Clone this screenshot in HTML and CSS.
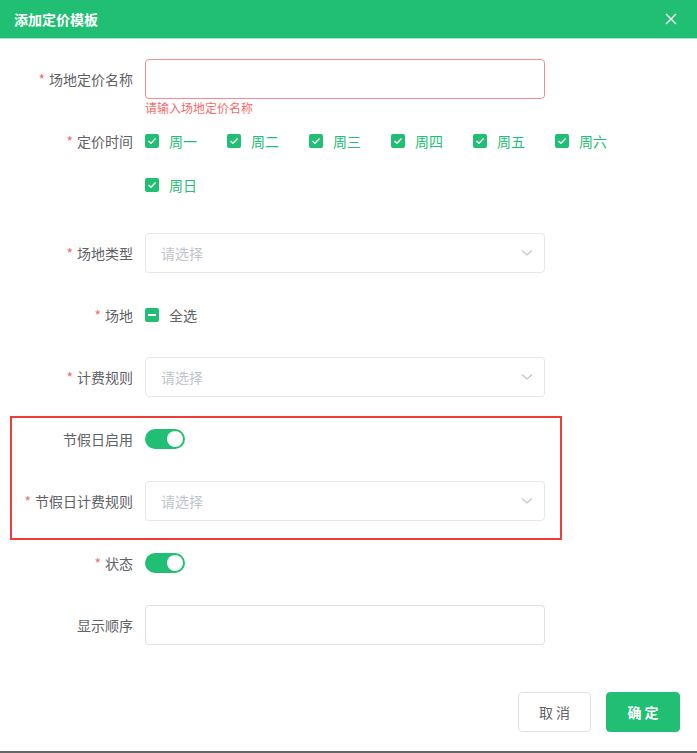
FILE: index.html
```html
<!DOCTYPE html>
<html lang="zh">
<head>
<meta charset="utf-8">
<title>添加定价模板</title>
<link rel="stylesheet" href="styles.css">
</head>
<body>
<div class="dialog">
  <div class="header">
    <span class="title">添加定价模板</span>
    <svg class="close" width="12" height="12" viewBox="0 0 12 12"><path d="M1 1L11 11M11 1L1 11" stroke="#fff" stroke-width="1.4" fill="none"/></svg>
  </div>
  <div class="body">
    <div class="item item-err">
      <label class="label"><span class="req">*</span>场地定价名称</label>
      <div class="content">
        <div class="input error"></div>
        <div class="err-msg">请输入场地定价名称</div>
      </div>
    </div>
    <div class="item">
      <label class="label"><span class="req">*</span>定价时间</label>
      <div class="content wide">
        <div class="checks">
          <span class="check on"><span class="box"><svg width="10" height="8" viewBox="0 0 10 8"><path d="M1.5 4L4 6.3L8.5 1.5" stroke="#fff" stroke-width="1.3" fill="none"/></svg></span><span class="ctext">周一</span></span>
          <span class="check on"><span class="box"><svg width="10" height="8" viewBox="0 0 10 8"><path d="M1.5 4L4 6.3L8.5 1.5" stroke="#fff" stroke-width="1.3" fill="none"/></svg></span><span class="ctext">周二</span></span>
          <span class="check on"><span class="box"><svg width="10" height="8" viewBox="0 0 10 8"><path d="M1.5 4L4 6.3L8.5 1.5" stroke="#fff" stroke-width="1.3" fill="none"/></svg></span><span class="ctext">周三</span></span>
          <span class="check on"><span class="box"><svg width="10" height="8" viewBox="0 0 10 8"><path d="M1.5 4L4 6.3L8.5 1.5" stroke="#fff" stroke-width="1.3" fill="none"/></svg></span><span class="ctext">周四</span></span>
          <span class="check on"><span class="box"><svg width="10" height="8" viewBox="0 0 10 8"><path d="M1.5 4L4 6.3L8.5 1.5" stroke="#fff" stroke-width="1.3" fill="none"/></svg></span><span class="ctext">周五</span></span>
          <span class="check on"><span class="box"><svg width="10" height="8" viewBox="0 0 10 8"><path d="M1.5 4L4 6.3L8.5 1.5" stroke="#fff" stroke-width="1.3" fill="none"/></svg></span><span class="ctext">周六</span></span>
          <span class="check on"><span class="box"><svg width="10" height="8" viewBox="0 0 10 8"><path d="M1.5 4L4 6.3L8.5 1.5" stroke="#fff" stroke-width="1.3" fill="none"/></svg></span><span class="ctext">周日</span></span>
        </div>
      </div>
    </div>
    <div class="item">
      <label class="label"><span class="req">*</span>场地类型</label>
      <div class="content">
        <div class="input select"><span class="ph">请选择</span><svg class="arrow" width="12" height="8" viewBox="0 0 12 8"><path d="M1 1.5L6 6L11 1.5" stroke="#c0c4cc" stroke-width="1.1" fill="none"/></svg></div>
      </div>
    </div>
    <div class="item">
      <label class="label"><span class="req">*</span>场地</label>
      <div class="content">
        <span class="check"><span class="box"><span class="dash"></span></span><span class="ctext plain">全选</span></span>
      </div>
    </div>
    <div class="item">
      <label class="label"><span class="req">*</span>计费规则</label>
      <div class="content">
        <div class="input select"><span class="ph">请选择</span><svg class="arrow" width="12" height="8" viewBox="0 0 12 8"><path d="M1 1.5L6 6L11 1.5" stroke="#c0c4cc" stroke-width="1.1" fill="none"/></svg></div>
      </div>
    </div>
    <div class="item">
      <label class="label">节假日启用</label>
      <div class="content">
        <span class="switch"><span class="knob"></span></span>
      </div>
    </div>
    <div class="item">
      <label class="label"><span class="req">*</span>节假日计费规则</label>
      <div class="content">
        <div class="input select"><span class="ph">请选择</span><svg class="arrow" width="12" height="8" viewBox="0 0 12 8"><path d="M1 1.5L6 6L11 1.5" stroke="#c0c4cc" stroke-width="1.1" fill="none"/></svg></div>
      </div>
    </div>
    <div class="item">
      <label class="label"><span class="req">*</span>状态</label>
      <div class="content">
        <span class="switch"><span class="knob"></span></span>
      </div>
    </div>
    <div class="item">
      <label class="label">显示顺序</label>
      <div class="content">
        <div class="input"></div>
      </div>
    </div>
  </div>
  <div class="footer">
    <button class="btn">取 消</button>
    <button class="btn primary">确 定</button>
  </div>
  <div class="highlight"></div>
</div>
</body>
</html>
```
FILE: styles.css
```css
html { background: #666; }
body {
  margin: 0;
  font-family: "Noto Sans CJK SC", "Noto Sans", sans-serif;
  font-size: 14px;
  color: #606266;
}
.dialog {
  position: relative;
  width: 697px;
  height: 751px;
  background: #fff;
}
.header {
  height: 38px;
  background: #21bf73;
  border-bottom: 1px solid #a6e6c6;
  display: flex;
  align-items: center;
  justify-content: space-between;
  padding: 0 20px 0 14px;
}
.title {
  color: #fff;
  font-size: 14px;
  font-weight: bold;
}
.close { display: block; }
.body { padding-top: 20px; }
.item {
  display: flex;
  margin-bottom: 22px;
}
.item-err { margin-bottom: 7px; }
.label {
  width: 133px;
  padding-right: 12px;
  text-align: right;
  line-height: 40px;
  flex: none;
  color: #606266;
}
.req { color: #f56c6c; margin-right: 4px; }
.content { width: 400px; }
.content.wide { width: 500px; }
.input {
  box-sizing: border-box;
  height: 40px;
  border: 1px solid #dcdfe6;
  border-radius: 4px;
}
.input.error { border-color: #f58d8d; }
.err-msg {
  color: #f56c6c;
  font-size: 12px;
  line-height: 12px;
  margin-top: 3px;
}
.select {
  display: flex;
  align-items: center;
  justify-content: space-between;
  padding: 0 11px 0 15px;
  border-color: #e4e7ed;
}
.ph { color: #c0c4cc; }
.arrow { display: block; }
.checks {
  display: flex;
  flex-wrap: wrap;
  row-gap: 4px;
  padding-bottom: 6px;
}
.check {
  display: flex;
  align-items: center;
  height: 40px;
  width: 82px;
  flex: none;
}
.box {
  width: 14px;
  height: 14px;
  border-radius: 2px;
  background: #21bf73;
  display: flex;
  align-items: center;
  justify-content: center;
  margin-right: 10px;
}
.box svg { display: block; }
.dash {
  width: 8px;
  height: 2px;
  background: #fff;
}
.ctext { color: #21bf73; }
.ctext.plain { color: #606266; }
.switch {
  display: flex;
  align-items: center;
  justify-content: flex-end;
  box-sizing: border-box;
  width: 40px;
  height: 20px;
  margin-top: 10px;
  border-radius: 10px;
  background: #21bf73;
  padding-right: 2px;
}
.knob {
  width: 16px;
  height: 16px;
  border-radius: 50%;
  background: #fff;
}
.footer {
  display: flex;
  justify-content: flex-end;
  gap: 15px;
  padding: 25px 17px 0 0;
}
.btn {
  box-sizing: border-box;
  height: 40px;
  width: 73px;
  border: 1px solid #dcdfe6;
  border-radius: 4px;
  background: #fff;
  color: #606266;
  font-family: inherit;
  font-size: 14px;
  padding: 0;
}
.btn.primary {
  width: 74px;
  background: #21bf73;
  border-color: #21bf73;
  color: #fff;
  font-weight: bold;
}
.highlight {
  position: absolute;
  left: 10px;
  top: 416px;
  width: 552px;
  height: 124px;
  box-sizing: border-box;
  border: 2px solid #ee3b3b;
}
```
